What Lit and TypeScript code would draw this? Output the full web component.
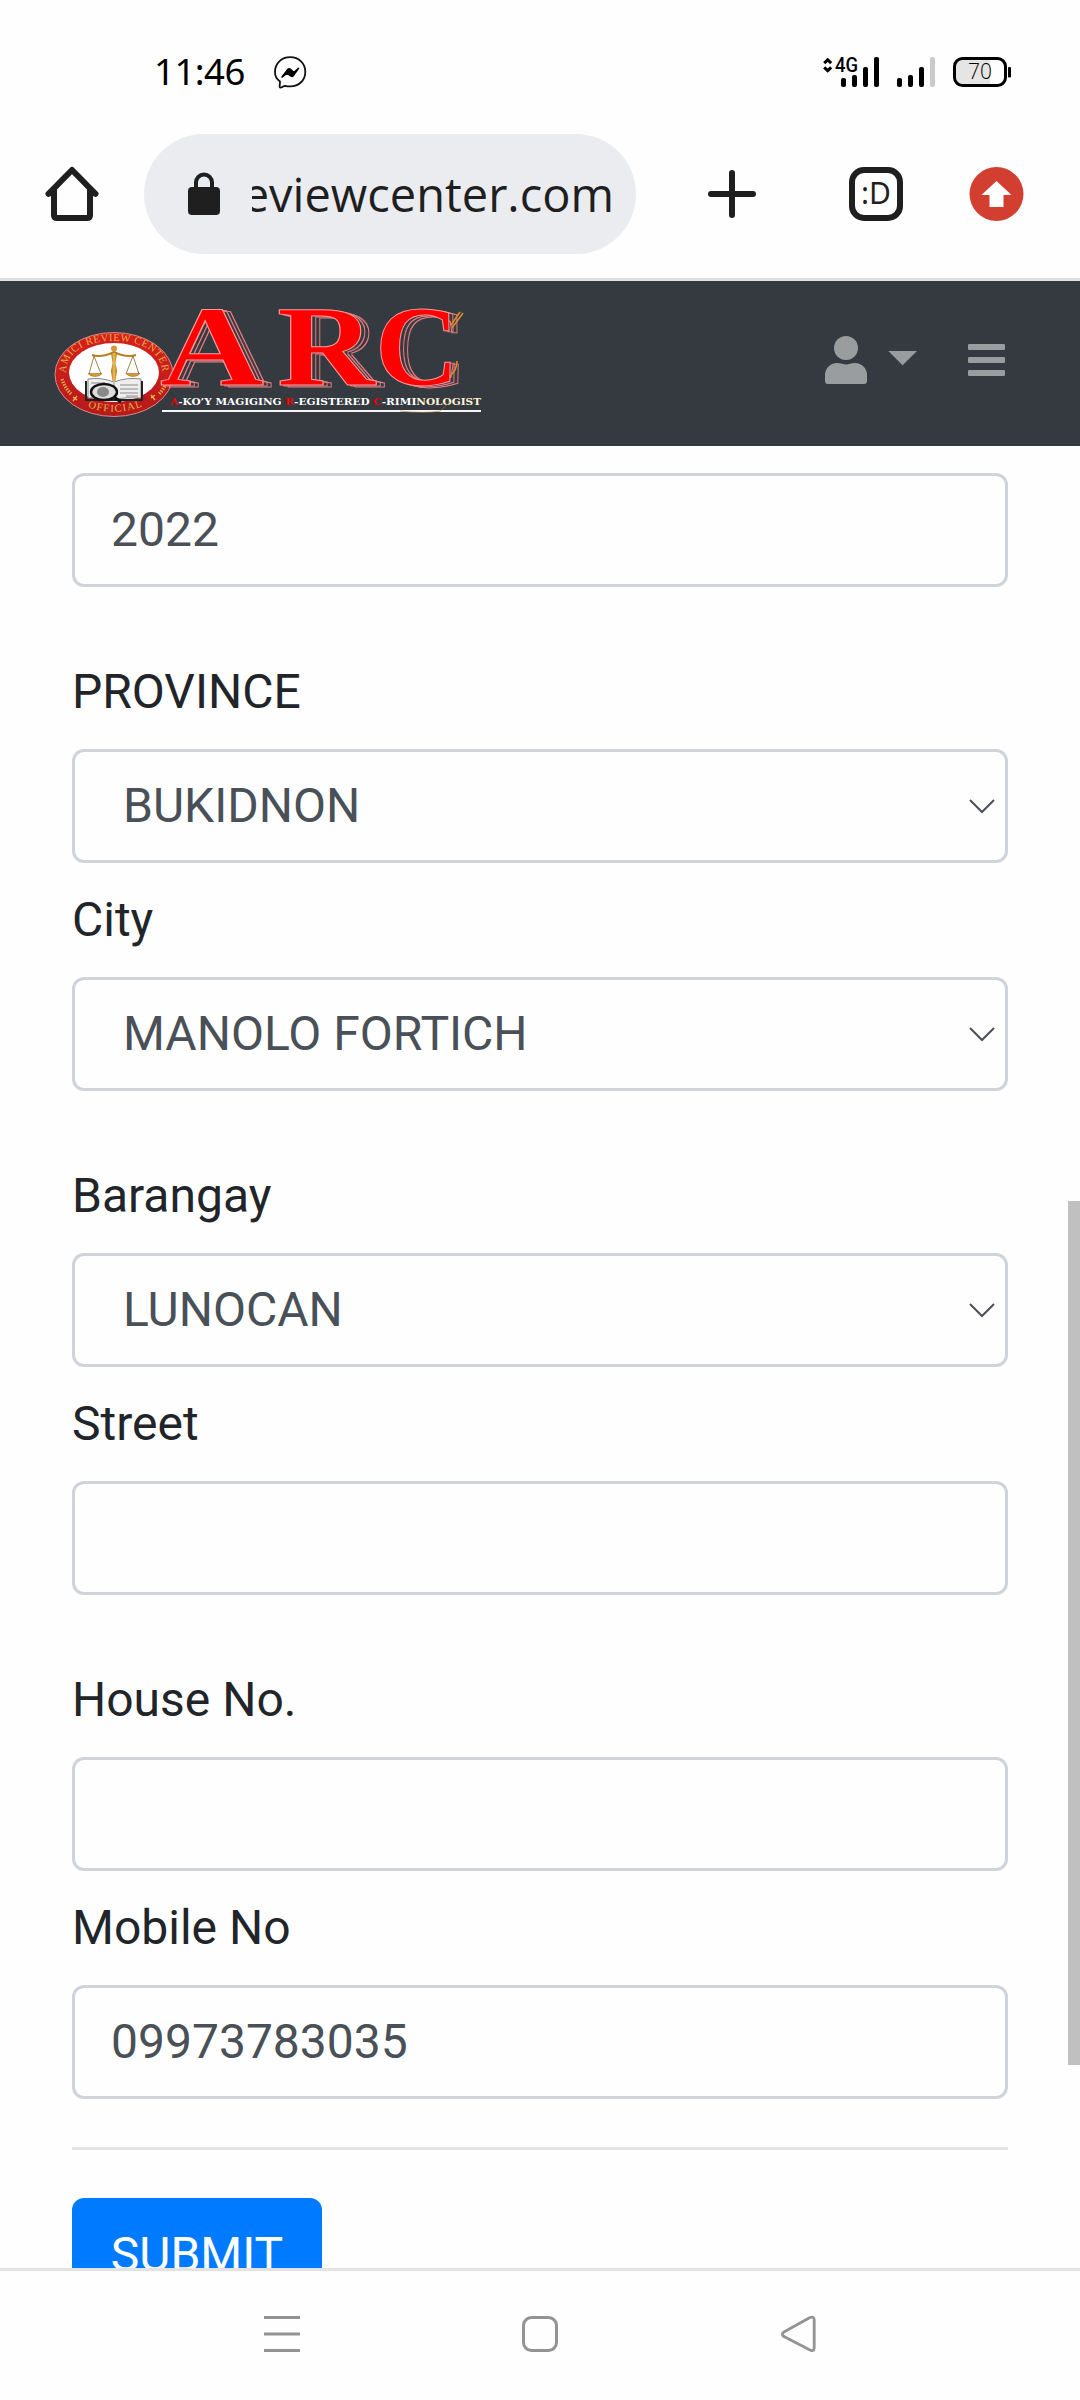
import { LitElement, html, svg, css, nothing } from "lit";
import { customElement, property } from "lit/decorators.js";

interface Field {
  label?: string;
  value: string;
  kind: "input" | "select";
  spaced?: boolean;
}

const FIELDS: Field[] = [
  { value: "2022", kind: "input" },
  { label: "PROVINCE", value: "BUKIDNON", kind: "select", spaced: true },
  { label: "City", value: "MANOLO FORTICH", kind: "select" },
  { label: "Barangay", value: "LUNOCAN", kind: "select", spaced: true },
  { label: "Street", value: "", kind: "input" },
  { label: "House No.", value: "", kind: "input", spaced: true },
  { label: "Mobile No", value: "09973783035", kind: "input" },
];

@customElement("status-bar")
class StatusBar extends LitElement {
  static styles = css`
    :host { display: flex; justify-content: space-between; height: 134px; box-sizing: border-box;
      padding: 50px 68px 0 154px; font-family: "Noto Sans", sans-serif; }
    .left { display: flex; gap: 28px; height: 44px; }
    .time { font-size: 36.5px; line-height: 42px; color: #000; width: 91px; white-space: nowrap; letter-spacing: -0.5px; }
    svg { display: block; }
    .small { font-family: Roboto, sans-serif; font-weight: 500; font-size: 21px; }
    .level { font-family: "Open Sans", sans-serif; font-weight: 300; font-size: 22px; }
  `;
  render() {
    const bar = (x: number, top: number, color = "#000") =>
      svg`<rect x=${x} y=${top} width="5" height=${87 - top} rx="2" fill=${color} />`;
    return html`
      <div class="left">
        <div class="time">11:46</div>
        <svg width="34" height="44" viewBox="273 50 34 44" fill="none">
          <path d="M280 81.400C280 85 279 86.500 280 87.500C281.500 88 283 86.300 285 85.800C287 86.300 288.500 86.400 290.200 86.400C298.900 86.400 305.300 80.200 305.300 71.900S299 57.200 290.200 57.200 275 63.500 275 71.900c0 4 1.800 7.300 5 9.500z" stroke="#111" stroke-width="1.800" stroke-linejoin="round"/>
          <path d="M282 77L288 69.300Q289 68.300 290.200 69.200L293.800 72.500L298.500 68.300L293.200 75.800Q292.200 77 291 76L287 73.200z" fill="#000" stroke="#000" stroke-width="1.600" stroke-linejoin="round"/>
        </svg>
      </div>
      <svg width="192" height="44" viewBox="820 50 192 44">
        <path d="M824.200 63.200l3.500-3.300 3.500 3.300M824.200 67.300l3.500 3.300 3.500-3.300" fill="none" stroke="#000" stroke-width="3"/>
        <text class="small" x="835" y="72" textLength="23" lengthAdjust="spacingAndGlyphs">4G</text>
        ${bar(841, 78)}${bar(852, 75)}${bar(863, 67)}${bar(874, 57)}
        ${bar(897, 78)}${bar(908, 75)}${bar(919, 67)}${bar(930, 57, "#cacaca")}
        <path d="M963 60H990V84H963a7 7 0 0 1-7-7V67a7 7 0 0 1 7-7z" fill="#e5e5e5"/>
        <rect x="954.500" y="58.500" width="51" height="27" rx="8" fill="none" stroke="#000" stroke-width="3"/>
        <rect x="1008" y="67" width="3" height="10.500" rx="1" />
        <text class="level" x="968" y="79.300" textLength="24" lengthAdjust="spacingAndGlyphs">70</text>
      </svg>`;
  }
}

@customElement("browser-bar")
class BrowserBar extends LitElement {
  static styles = css`
    :host { display: flex; align-items: center; height: 147px; box-sizing: border-box; padding: 0 56px 24px 44px;
      border-bottom: 3px solid #dfe1e1; font-family: "Noto Sans", sans-serif; color: #1f1f1f; }
    svg { display: block; flex: none; }
    .pill { display: flex; align-items: center; width: 492px; height: 120px; margin: 0 70px 0 44px; box-sizing: border-box;
      padding: 0 22px 0 44px; border-radius: 60px; background: #ebecf0; }
    .url { width: 362px; margin-left: 32px; overflow: hidden; display: flex; justify-content: flex-end; font-family: "Open Sans", sans-serif;
      font-size: 47px; line-height: 80px; white-space: nowrap; }
    .tabs { display: flex; align-items: center; justify-content: center; box-sizing: border-box; width: 54px; height: 54px;
      margin: 0 66px 0 91px; border: 6px solid #1f1f1f; border-radius: 15px; font-size: 30px; line-height: 38px; padding-bottom: 2px; }
  `;
  render() {
    return html`
      <svg width="56" height="56" viewBox="44 166 56 56" fill="none" stroke="#1f1f1f" stroke-width="6" stroke-linecap="round" stroke-linejoin="round">
        <path d="M48.500 193.800L72 170l23.500 23.800"/><path d="M54 189.500V215.500a2.500 2.500 0 0 0 2.500 2.500H87.500a2.500 2.500 0 0 0 2.500-2.500V189.500"/>
      </svg>
      <div class="pill">
        <svg width="32" height="44" viewBox="188 171 32 44">
          <rect x="188" y="186" width="32" height="28" rx="4" fill="#1f1f1f"/>
          <path d="M196 188V181.500a8 8 0 0 1 16 0V188" fill="none" stroke="#1f1f1f" stroke-width="4"/>
        </svg>
        <div class="url"><span>eviewcenter.com</span></div>
      </div>
      <svg width="52" height="52" viewBox="706 168 52 52" stroke="#1f1f1f" stroke-width="6" stroke-linecap="round">
        <path d="M732 173V215M711 194H753"/>
      </svg>
      <div class="tabs">:D</div>
      <svg width="55" height="56" viewBox="968.500 166 55 56">
        <circle cx="996" cy="194" r="27" fill="#d23f31"/>
        <path d="M996 181L1011 195H1003V207H989V195H981z" fill="#fff"/>
      </svg>`;
  }
}

@customElement("site-logo")
class SiteLogo extends LitElement {
  static styles = css`
    :host { display: block; }
    svg { display: block; overflow: visible; }
    .big { font-family: "Liberation Serif", serif; font-weight: bold; font-size: 114px; fill: #f00; stroke: #f59a9a; stroke-width: 1; filter: url(#bevel); }
    .tag { font-family: "DejaVu Serif", serif; font-weight: bold; font-size: 9.500px; }
    .ring { font-family: "Liberation Serif", serif; font-size: 10.500px; fill: #e8b044; }
  `;
  render() {
    const letters: [string, number, number, number][] = [
      ["A", 160, 104, 385], ["R", 277, 98, 385], ["C", 375, 84, 385],
    ];
    return html`<svg width="440" height="165" viewBox="50 281 440 165">
      <defs>
        <linearGradient id="ringFill" x1="0" y1="0" x2="0" y2="1"><stop offset="0" stop-color="#d8201c"/><stop offset="1" stop-color="#b51a1a"/></linearGradient>
        <linearGradient id="gold" x1="0" y1="0" x2="1" y2="0"><stop offset="0" stop-color="#a8691a"/><stop offset=".5" stop-color="#f0c457"/><stop offset="1" stop-color="#a8691a"/></linearGradient>
        <path id="arcTop" d="M66 376C64 352 86 341 114 341S164 352 162 376"/>
        <path id="arcBottom" d="M82 405Q114 418.500 146 405"/>
        <filter id="bevel" x="-10%" y="-10%" width="125%" height="120%" color-interpolation-filters="sRGB">
          <feOffset in="SourceAlpha" dx="8" dy="1.500" result="far"/>
          <feMorphology in="far" operator="erode" radius="1" result="farIn"/>
          <feComposite in="far" in2="farIn" operator="out" result="farLine"/>
          <feOffset in="SourceAlpha" dx="4" dy="0.500" result="near"/>
          <feMorphology in="near" operator="erode" radius="1" result="nearIn"/>
          <feComposite in="near" in2="nearIn" operator="out" result="nearLine"/>
          <feMerge result="lines"><feMergeNode in="farLine"/><feMergeNode in="nearLine"/></feMerge>
          <feFlood flood-color="#e07a7e"/>
          <feComposite in2="lines" operator="in" result="tinted"/>
          <feMerge><feMergeNode in="tinted"/><feMergeNode in="SourceGraphic"/></feMerge>
        </filter>
      </defs>
      <ellipse cx="114" cy="374.500" rx="59" ry="42" fill="url(#ringFill)" stroke="#d58d8d" stroke-width="1"/>
      <ellipse cx="114" cy="372.500" rx="45" ry="29.500" fill="#fff"/>
      <text class="ring"><textPath href="#arcTop" textLength="128" startOffset="3">AMICI REVIEW CENTER</textPath></text>
      <text class="ring"><textPath href="#arcBottom" startOffset="6" textLength="56">OFFICIAL</textPath></text>
      <g stroke="#dca044" stroke-width="3.500" stroke-dasharray="1.500 1.200" fill="none"><path d="M62 379q3 9 9 15M167 381q-3 8-8 13"/></g>
      <path d="M73 397l4 3M77 396l-4 5M151 398l4-3M151 395l4 5" stroke="#edb84c" stroke-width="1.300"/>
      <g fill="none" stroke="#222" stroke-width="1">
        <path d="M88 379q13-2 26 3q13-5 27-3v19q-14-1-27 1q-13-2-26-1z" fill="#eee" stroke="#888"/>
        <path d="M86 381v19h56V381" stroke-width="2"/>
        <path d="M114 383v16M120 385h18M120 389h18M120 393h18M126 396h12M91 383h14" stroke="#888"/>
        <ellipse cx="104" cy="392" rx="13" ry="8" fill="#ddd" stroke="#111" stroke-width="2.400"/>
        <ellipse cx="103" cy="392" rx="6" ry="5" fill="#888" stroke="none"/>
        <path d="M114 397l7 5" stroke="#111" stroke-width="3"/>
      </g>
      <g fill="none">
        <path d="M92 355q10 3 22-3q12 6 22 3" stroke="#b87e25" stroke-width="2"/>
        <path d="M94 356l-5 18M94 356l7 18M133 356l-7 18M133 356l6 18" stroke="#8a6426" stroke-width=".8"/>
        <path d="M88 373.500h14q-2 3-7 3t-7-3zM126 373.500h14q-2 3-7 3t-7-3z" fill="#d49a35" stroke="#a8691a" stroke-width=".6"/>
      </g>
      <path d="M111 353h6l-1.500 10 1.500 8-1.500 10h-3l-1.500-10 1.500-8z" fill="url(#gold)"/>
      <circle cx="114" cy="348.500" r="3" fill="#d49a35"/>
      ${letters.map(([ch, x, w, y]) => svg`<text class="big" x=${x} y=${y} textLength=${w} lengthAdjust="spacingAndGlyphs">${ch}</text>`)}
      <path d="M463 313l-11 15M460 312l-9 13M457 361q0 9-7 15" fill="none" stroke="#dc8a28" stroke-width="1.600"/>
      <text class="tag" x="170" y="404.700" textLength="311" lengthAdjust="spacingAndGlyphs" fill="#fff"><tspan fill="#f00000">A</tspan>-KO’Y MAGIGING <tspan fill="#f00000">R</tspan>-EGISTERED <tspan fill="#f00000">C</tspan>-RIMI<tspan fill="#fff3d8">NOLOGIST</tspan></text>
      <rect x="162" y="410" width="319" height="2" fill="#f6f6f6"/>
      <path d="M400 411q25 3 40 0l10-9" fill="none" stroke="#a8743a" stroke-width="1" opacity=".6"/>
    </svg>`;
  }
}

@customElement("site-header")
class SiteHeader extends LitElement {
  static styles = css`
    :host { display: flex; justify-content: space-between; height: 165px; padding: 0 75px 0 50px; box-sizing: border-box; background: #353a41; }
    .menu { display: block; }
  `;
  render() {
    return html`<site-logo></site-logo>
      <svg class="menu" width="181" height="165" viewBox="824 281 181 165" fill="#9a9da0">
        <circle cx="846" cy="348" r="12"/>
        <path d="M837 363q3 0 5 .8q4 1.200 8 0q2-.8 5-.8a12 12 0 0 1 12 12v6a3 3 0 0 1-3 3H828a3 3 0 0 1-3-3v-6a12 12 0 0 1 12-12z"/>
        <path d="M888.300 351H917L902.600 365.300z"/>
        <rect x="968" y="344" width="37" height="6" rx="1.200"/><rect x="968" y="357" width="37" height="6" rx="1.200"/><rect x="968" y="370" width="37" height="6" rx="1.200"/>
      </svg>`;
  }
}

@customElement("form-field")
class FormField extends LitElement {
  @property({ attribute: false }) field!: Field;
  static styles = css`
    :host { display: block; font-family: Roboto, sans-serif; font-size: 48px; line-height: 72px; }
    .label { color: #212529; margin-bottom: 21px; padding-top: 3px; height: 72px; }
    .box { display: flex; align-items: center; justify-content: space-between; box-sizing: border-box; height: 114px;
      border: 3px solid #ced4da; border-radius: 12px; padding: 0 36px; color: #495057; background: #fefefe; }
    .select { padding: 0 10px 0 48px; }
  `;
  render() {
    const f = this.field;
    const isSelect = f.kind === "select";
    return html`
      ${f.label ? html`<div class="label">${f.label}</div>` : nothing}
      <div class="box ${isSelect ? "select" : ""}">
        <span>${f.value}</span>
        ${isSelect ? html`<svg width="26" height="16" viewBox="0 0 26 16" fill="none" stroke="#495057" stroke-width="2"><path d="M1 2L13 14L25 2"/></svg>` : nothing}
      </div>`;
  }
}

@customElement("app-root")
class AppRoot extends LitElement {
  static styles = css`
    :host { display: flex; flex-direction: column; position: relative; width: 1080px; height: 2400px; overflow: hidden; background: #fefefe; }
    .page { height: 1822px; box-sizing: border-box; overflow: hidden; padding: 27px 72px 0; }
    .fields { display: flex; flex-direction: column; gap: 18px; }
    .spaced { margin-top: 48px; }
    .rule { height: 3px; background: #e5e5e5; margin: 48px 0; }
    .submit { display: block; box-sizing: border-box; width: 250px; height: 114px; border: 0; border-radius: 12px; padding: 0; margin: 0;
      background: #007bff; color: #fff; font: 48px/72px Roboto, sans-serif; text-align: center; }
    .nav { display: flex; justify-content: space-between; align-items: flex-start; height: 132px; box-sizing: border-box;
      border-top: 3px solid #e3e3e3; padding: 44px 263px 0; }
    .scroll { position: absolute; right: 0; top: 1201px; width: 12px; height: 864px; background: #c0c0c0; }
  `;
  render() {
    return html`
      <status-bar></status-bar>
      <browser-bar></browser-bar>
      <site-header></site-header>
      <main class="page">
        <div class="fields">
          ${FIELDS.map((f) => html`<form-field class=${f.spaced ? "spaced" : ""} .field=${f}></form-field>`)}
        </div>
        <div class="rule"></div>
        <button class="submit">SUBMIT</button>
      </main>
      <nav class="nav">
        <svg width="38" height="38" viewBox="0 0 38 38" fill="#939393"><rect x="1" y="1" width="36" height="3"/><rect x="1" y="17.500" width="36" height="3"/><rect x="1" y="34" width="36" height="3"/></svg>
        <svg width="38" height="38" viewBox="0 0 38 38" fill="none" stroke="#939393" stroke-width="3"><rect x="2.500" y="2.500" width="33" height="33" rx="8"/></svg>
        <svg width="38" height="38" viewBox="-2 0 38 38" fill="none" stroke="#939393" stroke-width="2.800" stroke-linejoin="round"><path d="M2.500 17.300L28.500 2.800Q33 1 33.200 4.500V33Q32.800 37 28.500 34.800L2.500 21.300Q0 19.300 2.500 17.300z"/></svg>
      </nav>
      <div class="scroll"></div>`;
  }
}
